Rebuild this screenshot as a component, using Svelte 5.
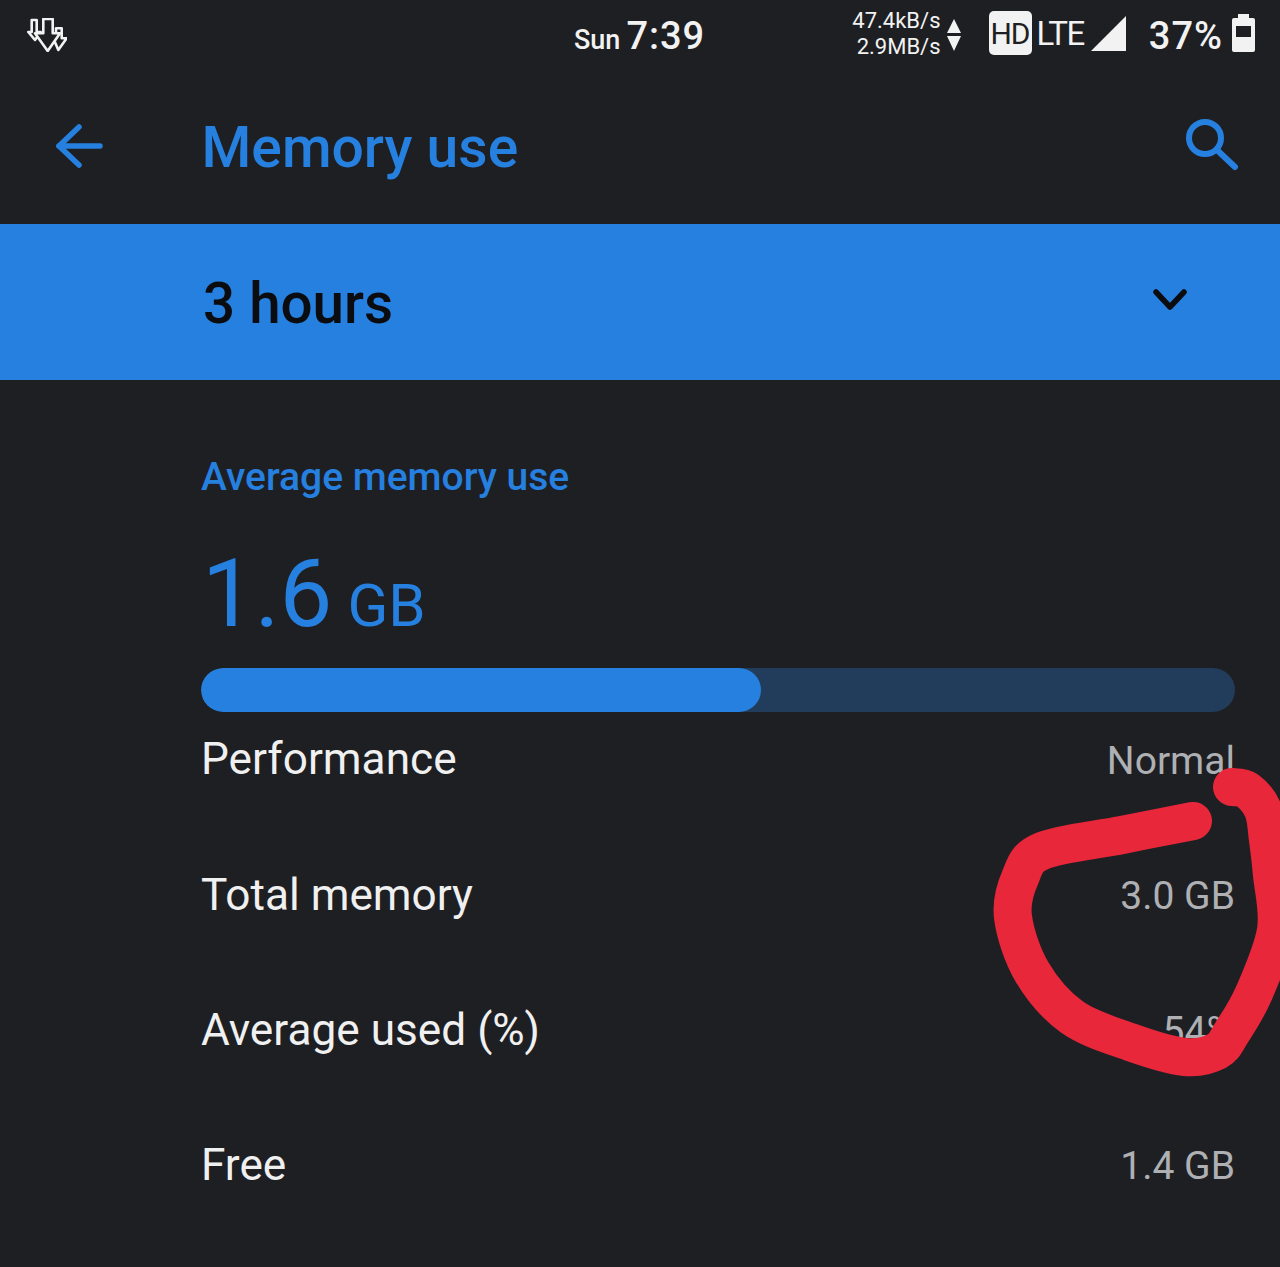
<script>
	const rows = [
		{ label: 'Total memory', value: '3.0 GB' },
		{ label: 'Average used (%)', value: '54%' },
		{ label: 'Free', value: '1.4 GB' }
	];

	// Points along the middle of the red marker stroke
	const inkPoints = [
		[1193, 821], [1122, 835], [1042, 851], [1020, 878], [1013, 917], [1032, 972], [1072, 1017],
		[1130, 1042], [1185, 1057], [1217, 1051], [1232, 1032], [1254, 993], [1276, 930],
		[1272, 875], [1268, 840], [1263, 810], [1247, 790], [1232, 787]
	];

	// Catmull-Rom through the points, written out as cubic segments
	function smooth(pts) {
		let d = `M${pts[0][0]} ${pts[0][1]}`;
		for (let i = 0; i < pts.length - 1; i++) {
			const p0 = pts[Math.max(i - 1, 0)];
			const p1 = pts[i];
			const p2 = pts[i + 1];
			const p3 = pts[Math.min(i + 2, pts.length - 1)];
			const c1x = p1[0] + (p2[0] - p0[0]) / 6;
			const c1y = p1[1] + (p2[1] - p0[1]) / 6;
			const c2x = p2[0] - (p3[0] - p1[0]) / 6;
			const c2y = p2[1] - (p3[1] - p1[1]) / 6;
			d += `C${c1x} ${c1y} ${c2x} ${c2y} ${p2[0]} ${p2[1]}`;
		}
		return d;
	}

	const inkPath = smooth(inkPoints);
</script>

<div class="screen">
	<header class="status">
		<svg class="dl" viewBox="0 0 40 34" width="40" height="34" fill="#1e1f23" stroke="#f2f2f2" stroke-width="2.600" stroke-linejoin="round">
			<path d="M4.700 2h5v12h4L8 22 1.300 14h3.400z" />
			<path d="M29 10.300h5.700v10h5L31.300 32l-5-11.700H29z" />
			<path d="M16.300 1h9.400v14.300H33L20.700 33 8 15.300h8.300z" />
		</svg>
		<div class="clock"><span class="day">Sun</span><span class="time">7:39</span></div>
		<div class="right">
			<div class="speed"><span>47.4kB/s</span><span>2.9MB/s</span></div>
			<svg class="updown" viewBox="0 0 14 32" width="14" height="32" fill="#f2f2f2">
				<path d="M7 0l7 14H0z" />
				<path d="M7 32L0 17h14z" />
			</svg>
			<span class="hd">HD</span>
			<span class="lte">LTE</span>
			<svg class="signal" viewBox="0 0 35 35" width="35" height="35" fill="#f2f2f2"><path d="M35 0v35H0z" /></svg>
			<span class="pct">37%</span>
			<svg class="battery" viewBox="0 0 23 38" width="23" height="38">
				<path d="M6 0h11v4h4a2 2 0 0 1 2 2v30a2 2 0 0 1-2 2H2a2 2 0 0 1-2-2V6a2 2 0 0 1 2-2h4z" fill="#f2f2f2" />
				<rect x="4" y="12" width="15" height="11" fill="#1e1f23" />
			</svg>
		</div>
	</header>

	<div class="toolbar">
		<svg class="back" viewBox="0 0 48 44" width="48" height="44" fill="none" stroke="#2680e0" stroke-width="5.500" stroke-linecap="round" stroke-linejoin="round">
			<path d="M45 22H4" />
			<path d="M24 3L4 22l20 19" />
		</svg>
		<h1>Memory use</h1>
		<svg class="search" viewBox="0 0 54 54" width="54" height="54" fill="none" stroke="#2680e0" stroke-width="6" stroke-linecap="round">
			<circle cx="20" cy="20" r="16" />
			<path d="M32 32l18 17" />
		</svg>
	</div>

	<div class="range">
		<span>3 hours</span>
		<svg viewBox="0 0 34 24" width="34" height="24" fill="none" stroke="#0a0c10" stroke-width="5.500" stroke-linecap="round" stroke-linejoin="round">
			<path d="M3 4l14 15L31 4" />
		</svg>
	</div>

	<main class="content">
		<div class="caption">Average memory use</div>
		<div class="amount"><span class="big">1.6</span><span class="unit">GB</span></div>
		<div class="bar"><div class="fill" style="width: 54.2%"></div></div>

		<div class="row perf">
			<span class="label">Performance</span>
			<span class="value">Normal</span>
		</div>
		{#each rows as row}
			<div class="row">
				<span class="label">{row.label}</span>
				<span class="value">{row.value}</span>
			</div>
		{/each}
	</main>

	<!-- hand drawn circle on top of the screenshot -->
	<svg class="ink" viewBox="0 0 1280 1267" width="1280" height="1267" fill="none" stroke="#e9273a" stroke-width="38" stroke-linecap="round" stroke-linejoin="round">
		<path d={inkPath} />
	</svg>
</div>

<style>
	:global(body) {
		background: #1e1f23;
	}

	.screen {
		position: relative;
		width: 1280px;
		height: 1267px;
		overflow: hidden;
		background: #1e1f23;
		font-family: Roboto, 'Liberation Sans', sans-serif;
		color: #f2f2f2;
	}

	.status {
		position: relative;
		display: flex;
		align-items: center;
		justify-content: space-between;
		height: 72px;
		padding: 0 25px 0 27px;
		box-sizing: border-box;
	}

	.dl {
		margin-bottom: 2px;
	}

	.clock {
		position: absolute;
		left: 574px;
		top: 14px;
		display: flex;
		align-items: baseline;
		gap: 6px;
		white-space: nowrap;
	}

	.day {
		font-size: 27px;
		font-weight: 500;
	}

	.time {
		font-size: 38px;
		font-weight: 500;
		letter-spacing: 1px;
	}

	.right {
		display: flex;
		align-items: center;
		margin-top: -6px;
	}

	.speed {
		display: flex;
		flex-direction: column;
		align-items: flex-end;
		font-size: 22px;
		line-height: 26px;
		margin: 2px 6px 0 0;
	}

	.updown {
		margin: 4px 28px 0 0;
	}

	.hd {
		display: flex;
		align-items: center;
		justify-content: center;
		width: 43px;
		height: 44px;
		border-radius: 5px;
		background: #f2f2f2;
		color: #1e1f23;
		font-size: 30px;
		letter-spacing: -1px;
		margin-right: 5px;
	}

	.lte {
		font-size: 33px;
		letter-spacing: -1.500px;
		margin-right: 7px;
	}

	.signal {
		margin-right: 23px;
	}

	.pct {
		font-size: 38px;
		font-weight: 500;
		letter-spacing: 1px;
		margin: 6px 9px 0 0;
	}

	.toolbar {
		position: relative;
		display: flex;
		align-items: center;
		height: 152px;
		padding-left: 55px;
		box-sizing: border-box;
	}

	.back {
		margin-right: 98.500px;
		margin-bottom: 4px;
	}

	h1 {
		margin: 0 0 2px;
		font-size: 57px;
		font-weight: 500;
		color: #2680e0;
	}

	.search {
		position: absolute;
		right: 41px;
		top: 46px;
	}

	.range {
		display: flex;
		align-items: center;
		justify-content: space-between;
		height: 156px;
		padding: 0 93px 0 203px;
		box-sizing: border-box;
		background: #2680e0;
		color: #0a0c10;
		font-size: 56.500px;
		font-weight: 500;
	}

	.range span {
		margin-top: 3px;
	}

	.range svg {
		margin-bottom: 4px;
	}

	.content {
		padding: 73px 45px 0 201px;
	}

	.caption {
		font-size: 39px;
		line-height: 48px;
		font-weight: 500;
		color: #2680e0;
	}

	.amount {
		display: flex;
		align-items: baseline;
		gap: 15px;
		height: 95px;
		margin-top: 46px;
		color: #2680e0;
		line-height: 95px;
		margin-left: 1px;
	}

	.big {
		font-size: 94px;
	}

	.unit {
		font-size: 60px;
	}

	.bar {
		height: 44px;
		margin-top: 26px;
		border-radius: 22px;
		background: #223c5b;
		overflow: hidden;
	}

	.fill {
		height: 100%;
		border-radius: 22px;
		background: #2680e0;
	}

	.row {
		display: flex;
		align-items: center;
		justify-content: space-between;
		height: 135px;
	}

	.perf {
		height: 94px;
		margin-bottom: 21px;
	}

	.label {
		font-size: 44.200px;
		color: #f0f0f0;
	}

	.value {
		font-size: 39px;
		color: #aeb0b3;
		margin-top: 3px;
	}

	.ink {
		position: absolute;
		left: 0;
		top: 0;
		pointer-events: none;
	}
</style>
